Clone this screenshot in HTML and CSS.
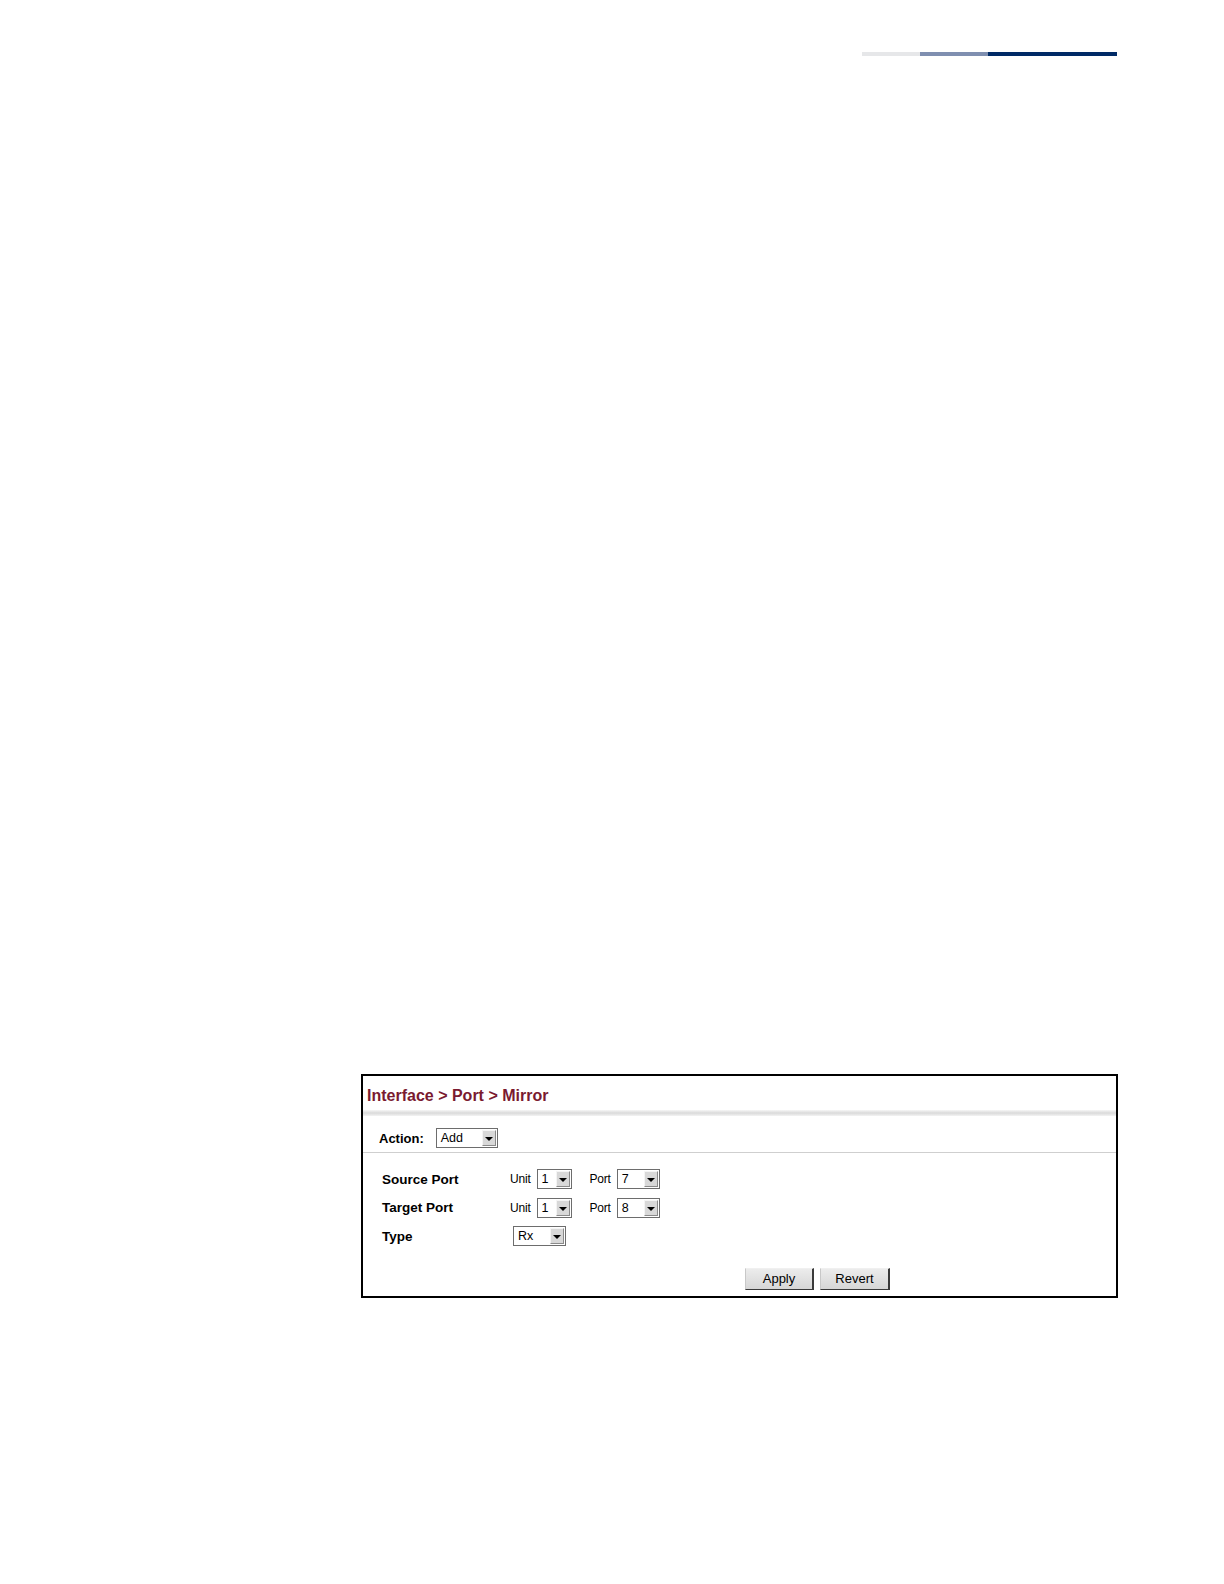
FILE: index.html
```html
<!DOCTYPE html>
<html>
<head>
<meta charset="utf-8">
<link rel="stylesheet" href="styles.css">
</head>
<body>
<div class="page">
  <div class="rule"><span class="seg s1"></span><span class="seg s2"></span><span class="seg s3"></span></div>
  <div class="panel">
    <div class="title">Interface &gt; Port &gt; Mirror</div>
    <div class="band"></div>
    <div class="action">
      <span class="lbl">Action:</span>
      <span class="sel w-add"><span class="val">Add</span><span class="arr"></span></span>
    </div>
    <div class="rows">
      <div class="row">
        <span class="lbl name">Source Port</span>
        <span class="sm">Unit</span>
        <span class="sel w-unit"><span class="val">1</span><span class="arr"></span></span>
        <span class="sm port">Port</span>
        <span class="sel w-port"><span class="val">7</span><span class="arr"></span></span>
      </div>
      <div class="row">
        <span class="lbl name">Target Port</span>
        <span class="sm">Unit</span>
        <span class="sel w-unit"><span class="val">1</span><span class="arr"></span></span>
        <span class="sm port">Port</span>
        <span class="sel w-port"><span class="val">8</span><span class="arr"></span></span>
      </div>
      <div class="row">
        <span class="lbl name">Type</span>
        <span class="sel w-type"><span class="val">Rx</span><span class="arr"></span></span>
      </div>
    </div>
    <div class="buttons">
      <span class="btn b-apply">Apply</span>
      <span class="btn b-revert">Revert</span>
    </div>
  </div>
</div>
</body>
</html>
```
FILE: styles.css
```css
html, body { margin: 0; padding: 0; background: #fff; }
body { font-family: "Liberation Sans", Arial, sans-serif; color: #000; }
.page { padding: 52px 0 0 361px; }
.rule { display: flex; margin-left: 501px; height: 4px; }
.seg { display: block; height: 4px; }
.s1 { width: 58px; background: #e6e7e9; }
.s2 { width: 68px; background: #7f8fb0; }
.s3 { width: 129px; background: #002a66; }

.panel {
  margin-top: 1018px;
  width: 757px;
  height: 224px;
  box-sizing: border-box;
  border: 2px solid #000;
  display: flex;
  flex-direction: column;
}
.title {
  height: 34px;
  padding-left: 4px;
  display: flex;
  align-items: center;
  font-size: 16px;
  font-weight: bold;
  color: #7a1a30;
  padding-top: 5px;
  box-sizing: border-box;
}
.band {
  height: 6px;
  background: linear-gradient(#f6f6f6, #dadada 50%, #f3f3f3);
}
.action {
  height: 37px;
  display: flex;
  align-items: center;
  gap: 12px;
  padding-left: 16px;
  padding-top: 8px;
  box-sizing: border-box;
  border-bottom: 1px solid #cfcfcf;
}
.lbl { font-size: 13px; font-weight: bold; }
.name { font-size: 13.5px; width: 128px; }
.rows { padding: 12px 0 0 19px; display: flex; flex-direction: column; }
.row { height: 28.5px; display: flex; align-items: center; }
.sm { font-size: 12px; margin-right: 6px; letter-spacing: -0.2px; }
.port { margin-left: 18px; }
.sel {
  display: inline-flex;
  align-items: stretch;
  height: 20px;
  box-sizing: border-box;
  border: 1px solid #6d6d6d;
  background: #fff;
}
.val { flex: 1; font-size: 12.5px; line-height: 18px; padding-left: 4px; }
.arr {
  width: 14px;
  margin: 1px;
  box-sizing: border-box;
  background: #d8d8d8;
  border: 1px solid;
  border-color: #f4f4f4 #8a8a8a #8a8a8a #f4f4f4;
  position: relative;
}
.arr::after {
  content: "";
  position: absolute;
  left: 2px;
  top: 6px;
  border-left: 4px solid transparent;
  border-right: 4px solid transparent;
  border-top: 4px solid #000;
}
.w-add { width: 62px; }
.w-unit { width: 35px; }
.w-port { width: 43px; }
.w-type { width: 53px; margin-left: 3px; }

.buttons {
  display: flex;
  gap: 6px;
  padding-left: 382px;
  margin-top: 17px;
}
.btn {
  height: 22px;
  box-sizing: border-box;
  display: flex;
  align-items: center;
  justify-content: center;
  font-size: 13px;
  background: linear-gradient(#ececec, #d6d6d6);
  border: 1px solid;
  border-color: #f0f0f0 #3a3a3a #3a3a3a #c8c8c8;
  border-right-width: 2px;
}
.b-apply { width: 69px; }
.b-revert { width: 70px; }
```
